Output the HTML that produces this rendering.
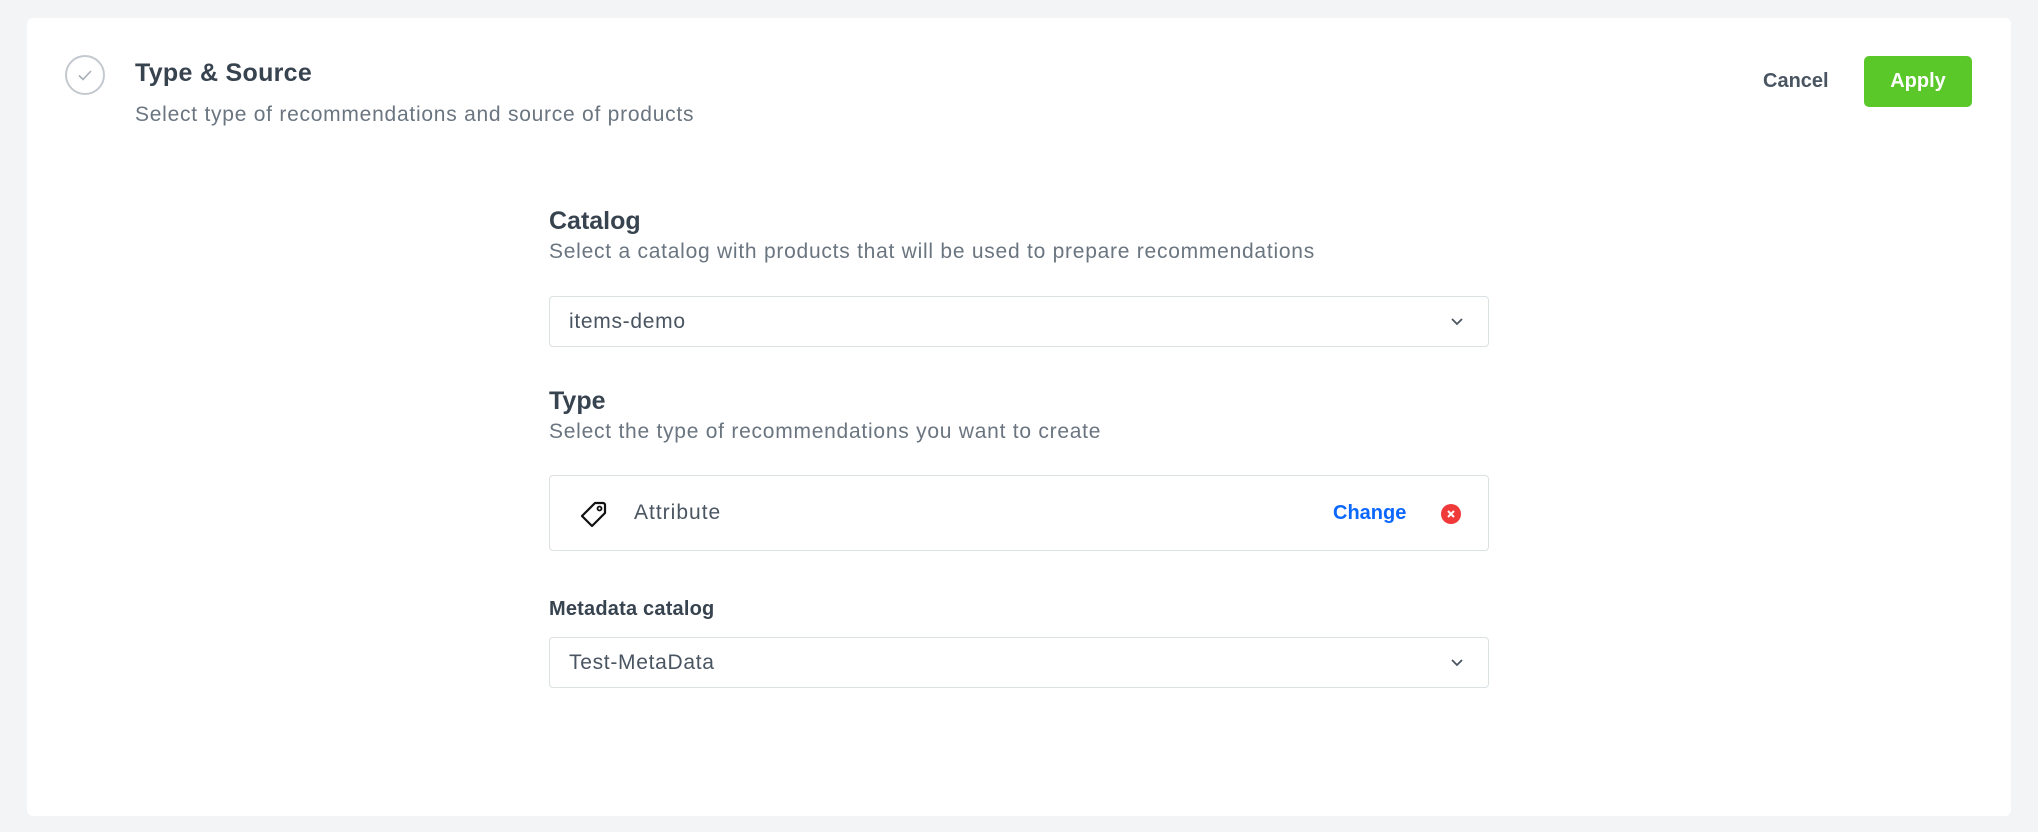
<!DOCTYPE html>
<html><head><meta charset="utf-8"><style>
*{box-sizing:border-box;margin:0;padding:0}
body{width:2038px;height:832px;background:#f3f4f6;font-family:"Liberation Sans",sans-serif;position:relative;overflow:hidden}
.card{position:absolute;left:27px;top:18px;width:1984px;height:798px;background:#fff;border-radius:6px}
.a{position:absolute;white-space:nowrap}
.h{color:#384350;font-weight:bold}
.g{color:#6a7580;font-size:21px;letter-spacing:0.75px}
.sel{position:absolute;left:549px;width:940px;border:1px solid #dbe0e3;border-radius:4px;background:#fff}
.v{color:#4a5562;font-size:21px;letter-spacing:0.7px;font-weight:400}
</style></head><body>
<div class="card"></div>
<svg class="a" style="left:64px;top:54px" width="42" height="42" viewBox="0 0 42 42"><circle cx="21" cy="21" r="19" fill="none" stroke="#c4c9cf" stroke-width="2"/><path d="M15 21.5l4 4 8-8.5" fill="none" stroke="#a7aeb6" stroke-width="1.6"/></svg>
<div class="a h" style="left:135px;top:59px;font-size:25px;letter-spacing:0.3px">Type &amp; Source</div>
<div class="a g" style="left:135px;top:103px">Select type of recommendations and source of products</div>
<div class="a h" style="left:1763px;top:70px;font-size:20px;color:#4a5562">Cancel</div>
<div class="a" style="left:1864px;top:56px;width:108px;height:51px;background:#5ac829;border-radius:5px;color:#fff;font-size:20px;font-weight:bold;text-align:center;line-height:51px">Apply</div>

<div class="a h" style="left:549px;top:207px;font-size:25px">Catalog</div>
<div class="a g" style="left:549px;top:240px">Select a catalog with products that will be used to prepare recommendations</div>
<div class="sel" style="top:296px;height:51px"><span class="a v" style="left:19px;top:13px">items-demo</span>
<svg class="a" style="left:900px;top:19px" width="14" height="12"><path d="M2 3l5 5 5-5" fill="none" stroke="#4a5562" stroke-width="1.8"/></svg></div>

<div class="a h" style="left:549px;top:387px;font-size:25px">Type</div>
<div class="a g" style="left:549px;top:420px">Select the type of recommendations you want to create</div>
<div class="sel" style="top:475px;height:76px">
<svg class="a" style="left:30px;top:24px" width="28" height="28" viewBox="0 0 28 28"><path d="M15 3h8a2 2 0 0 1 2 2v8L12 26 2 16z" fill="none" stroke="#111" stroke-width="2.2" stroke-linejoin="round"/><circle cx="19.5" cy="8.5" r="2" fill="none" stroke="#111" stroke-width="1.8"/></svg>
<span class="a v" style="left:84px;top:25px;font-size:21px;letter-spacing:1px">Attribute</span>
<span class="a" style="left:783px;top:26px;font-size:20px;color:#0b68ff;font-weight:bold">Change</span>
<svg class="a" style="left:891px;top:28px" width="20" height="20"><circle cx="10" cy="10" r="10" fill="#f03a3a"/><path d="M7 7l6 6M13 7l-6 6" stroke="#fff" stroke-width="2"/></svg>
</div>

<div class="a h" style="left:549px;top:598px;font-size:20px;letter-spacing:0.2px">Metadata catalog</div>
<div class="sel" style="top:637px;height:51px"><span class="a v" style="left:19px;top:13px">Test-MetaData</span>
<svg class="a" style="left:900px;top:19px" width="14" height="12"><path d="M2 3l5 5 5-5" fill="none" stroke="#4a5562" stroke-width="1.8"/></svg></div>
</body></html>
